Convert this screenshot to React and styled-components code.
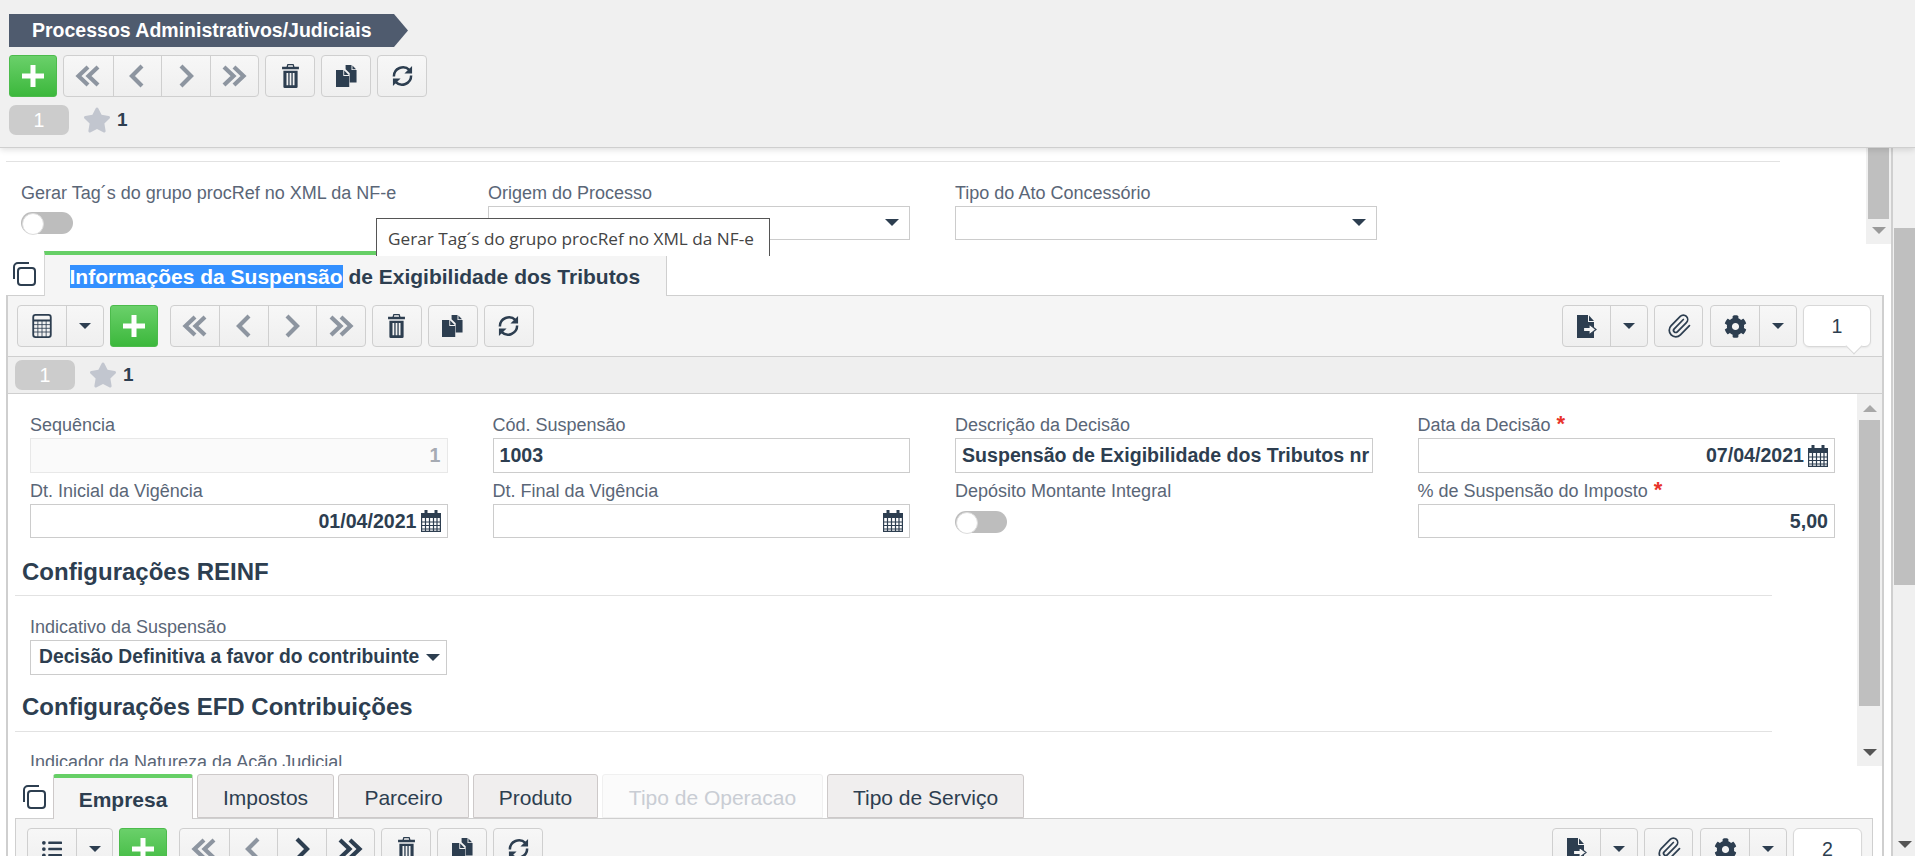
import React from 'react'
import styled, { createGlobalStyle } from 'styled-components'
import { FaCog, FaStar, FaListUl } from 'react-icons/fa'
import { Paperclip } from 'lucide-react'

const dark = '#2d3e50'
const FONT = '"Liberation Sans", Arial, sans-serif'

const GlobalStyle = createGlobalStyle`
  html, body {
    margin: 0;
    padding: 0;
    height: 100%;
    overflow: hidden;
    background: #fff;
  }
  * { box-sizing: border-box; }
`

const Page = styled.div`
  display: flex;
  flex-direction: column;
  height: 100vh;
  font-family: ${FONT};
  color: ${dark};
  overflow: hidden;
`

const Header = styled.header`
  position: relative;
  z-index: 3;
  flex: none;
  height: 148px;
  padding: 14px 0 0 9px;
  background: #f0f0f0;
  border-bottom: 1px solid #cfcfcf;
  box-shadow: 0 2px 6px rgba(0, 0, 0, 0.12);
`

const Title = styled.div`
  display: flex;
  align-items: center;
  width: 399px;
  height: 33px;
  padding-left: 23px;
  background: #4f5b6e;
  color: #fff;
  font-size: 19.5px;
  font-weight: 700;
  clip-path: polygon(0 0, 385px 0, 100% 50%, 385px 100%, 0 100%);
`

const Body = styled.div`
  display: flex;
  flex: 1;
  min-height: 0;
`

const Content = styled.div`
  display: flex;
  flex-direction: column;
  width: 1893px;
  flex: none;
  border-right: 2px solid #cfcfcf;
  overflow: hidden;
`

const Track = styled.div`
  display: flex;
  flex: none;
  flex-direction: column;
  align-items: center;
  width: ${(p) => p.$w}px;
  background: #f0f0f0;
`

const OuterTrack = styled(Track)`
  padding-left: 1px;
`

const Thumb = styled.div`
  flex: none;
  width: ${(p) => p.$w}px;
  height: ${(p) => p.$h}px;
  margin-top: ${(p) => p.$top || 0}px;
  background: #bfbfbf;
`

const Arrow = styled.div`
  flex: none;
  width: 0;
  height: 0;
  border-left: 7px solid transparent;
  border-right: 7px solid transparent;
  margin-top: ${(p) => (p.$auto ? 'auto' : p.$top ? `${p.$top}px` : '0')};
  margin-bottom: ${(p) => p.$bottom || 0}px;
  ${(p) =>
    p.$up
      ? `border-bottom: 7px solid ${p.$color};`
      : `border-top: 7px solid ${p.$color};`}
`

const Upper = styled.section`
  position: relative;
  flex: none;
  display: flex;
  height: 96px;
`

const UpperBody = styled.div`
  flex: 1;
  padding-left: 6px;
`

const UpperRule = styled.div`
  width: 1774px;
  height: 14px;
  border-bottom: 1px solid #e2e2e2;
`

const UpperGrid = styled.div`
  display: grid;
  grid-template-columns: repeat(3, 422px);
  column-gap: 45px;
  padding: 19.5px 0 0 15px;
`

const Field = styled.div`
  display: flex;
  flex-direction: column;
  min-width: 0;
`

const Label = styled.div`
  height: 24px;
  line-height: 22px;
  font-size: 18px;
  color: #5a6677;
  white-space: nowrap;
`

const Required = styled.span`
  margin-left: 6px;
  color: #e8332a;
  font-size: 22px;
  font-weight: 700;
  line-height: 18px;
`

const Box = styled.div`
  display: flex;
  align-items: center;
  justify-content: ${(p) => (p.$right ? 'flex-end' : 'flex-start')};
  gap: 4px;
  height: ${(p) => p.$h || 35}px;
  padding: 0 6px;
  background: ${(p) => (p.$disabled ? '#fafafa' : '#fff')};
  border: 1px solid ${(p) => (p.$disabled ? '#e8e8e8' : '#cccccc')};
  color: ${(p) => (p.$disabled ? '#a6abb3' : dark)};
  font-size: 19.6px;
  font-weight: 700;
  white-space: nowrap;
  overflow: hidden;
`

const SelectBox = styled(Box)`
  justify-content: ${(p) => (p.$tight ? 'space-between' : 'flex-end')};
  padding: ${(p) => (p.$tight ? '0 6px 0 8px' : '0 10px 0 6px')};
  font-size: 19.3px;
`

const Caret = styled.span`
  flex: none;
  display: inline-block;
  width: 0;
  height: 0;
  border-left: ${(p) => p.$s || 7}px solid transparent;
  border-right: ${(p) => p.$s || 7}px solid transparent;
  border-top: ${(p) => p.$s || 7}px solid ${dark};
`

const Toggle = styled.div`
  position: relative;
  width: 52px;
  height: 22px;
  margin-top: ${(p) => p.$top}px;
  background: #bdbdbd;
  border-radius: 11px;
  &::before {
    content: '';
    position: absolute;
    left: 1px;
    top: 1px;
    width: 20px;
    height: 20px;
    border-radius: 50%;
    background: #fff;
    border: 1px solid #ddd;
  }
`

const Tooltip = styled.div`
  position: absolute;
  z-index: 2;
  left: 376px;
  top: 70px;
  width: 394px;
  height: 38px;
  padding: 8px 0 0 11px;
  background: #fff;
  border: 1px solid #555;
  border-bottom: none;
  font-family: "Open Sans", sans-serif;
  font-size: 17.2px;
  line-height: 24px;
  color: #444;
  white-space: nowrap;
`

const MainTabRow = styled.div`
  flex: none;
  display: flex;
  align-items: flex-start;
  height: 45px;
  margin: 7px 7px 0 6px;
  padding-left: 6px;
  border-bottom: 1px solid #cfcfcf;
`

const CopyWrap = styled.div`
  flex: none;
  align-self: flex-start;
  width: ${(p) => p.$w}px;
  padding-top: ${(p) => p.$top}px;
  line-height: 0;
`

const MainTab = styled.div`
  position: relative;
  width: 623px;
  height: 45px;
  padding: 10px 0 0 25px;
  background: #f5f5f5;
  border-top: 4px solid #66cf66;
  border-left: 1px solid #d5d5d5;
  border-right: 1px solid #cfcfcf;
  font-size: 21px;
  font-weight: 700;
  line-height: 23px;
  white-space: nowrap;
`

const Selected = styled.span`
  background: #3390ff;
  color: #fff;
`

const Panel = styled.div`
  flex: 1;
  min-height: 0;
  margin: 0 7px 0 6px;
  border-left: 2px solid #cfcfcf;
  border-right: 2px solid #cfcfcf;
  overflow: hidden;
`

const Toolbar = styled.div`
  display: flex;
  align-items: flex-start;
  justify-content: space-between;
  height: ${(p) => p.$h}px;
  padding: ${(p) => p.$pad};
  background: #f5f5f5;
`

const HeaderTools = styled.div`
  display: flex;
  margin-top: 8px;
`

const ToolRow = styled.div`
  display: flex;
`

const Group = styled.div`
  flex: none;
  display: flex;
  height: 42px;
  margin-left: ${(p) => p.$ml ?? 6}px;
  background: linear-gradient(#f7f7f7, #efefef);
  border: 1px solid #cfcfcf;
  border-radius: 4px;
  overflow: hidden;
`

const Tool = styled.div`
  display: flex;
  align-items: center;
  justify-content: center;
  width: ${(p) => p.$w}px;
  height: 100%;
  & + & {
    border-left: 1px solid #cfcfcf;
  }
`

const AddButton = styled.div`
  flex: none;
  display: flex;
  align-items: center;
  justify-content: center;
  width: 48px;
  height: 42px;
  margin-left: ${(p) => p.$ml ?? 6}px;
  background: linear-gradient(#6ad06a, #3cb83c);
  border: 1px solid #4cbb4c;
  border-radius: 3px;
`

const PageBox = styled.div`
  position: relative;
  flex: none;
  display: flex;
  align-items: center;
  justify-content: center;
  width: ${(p) => p.$w}px;
  height: 42px;
  margin-left: 6px;
  background: #fff;
  border: 1px solid #d8d8d8;
  border-radius: 6px;
  font-size: 19.6px;
  color: ${dark};
  box-shadow: 0 1px 2px rgba(0, 0, 0, 0.06);
  &::after {
    content: '';
    position: absolute;
    right: 10px;
    bottom: -6px;
    width: 11px;
    height: 11px;
    background: #fff;
    border-right: 1px solid #d8d8d8;
    border-bottom: 1px solid #d8d8d8;
    transform: rotate(45deg);
  }
`

const RecordBar = styled.div`
  display: flex;
  align-items: center;
  height: ${(p) => p.$h}px;
  margin-top: ${(p) => p.$top || 0}px;
  padding-left: ${(p) => p.$pad}px;
  background: ${(p) => p.$bg || 'transparent'};
  border-top: ${(p) => (p.$bordered ? '1px solid #cfcfcf' : 'none')};
  border-bottom: ${(p) => (p.$bordered ? '1px solid #cfcfcf' : 'none')};
`

const Badge = styled.div`
  display: flex;
  align-items: center;
  justify-content: center;
  width: 60px;
  height: 30px;
  background: #cccccc;
  border-radius: 7px;
  color: #fff;
  font-size: 19.6px;
`

const StarCount = styled.div`
  display: flex;
  align-items: center;
  gap: 6px;
  margin-left: 14px;
  font-size: 19px;
  font-weight: 700;
`

const FormArea = styled.div`
  display: flex;
  height: 372px;
  background: #fff;
`

const FormScroll = styled.div`
  flex: 1;
  min-width: 0;
  overflow: hidden;
`

const FieldGrid = styled.div`
  display: grid;
  grid-template-columns: repeat(4, 417.5px);
  column-gap: 45px;
  row-gap: 7px;
  padding: 20px 0 0 22px;
`

const SectionHead = styled.h3`
  width: 1757px;
  height: ${(p) => p.$h}px;
  margin: ${(p) => p.$top}px 0 0 7px;
  padding-left: 7px;
  border-bottom: 1px solid #e2e2e2;
  font-size: 24px;
  font-weight: 700;
  line-height: 33px;
  color: ${dark};
`

const SectionField = styled(Field)`
  width: 417px;
  margin: 19.5px 0 0 22px;
`

const SubTabRow = styled.div`
  display: flex;
  align-items: flex-end;
  height: 52px;
  padding-left: 14px;
`

const SubTab = styled.div`
  flex: none;
  display: flex;
  align-items: center;
  justify-content: center;
  width: ${(p) => p.$w}px;
  height: ${(p) => (p.$active ? 45 : 44)}px;
  margin: 0 4px ${(p) => (p.$active ? -1 : 0)}px 0;
  padding-top: ${(p) => (p.$active ? 2 : 4)}px;
  position: relative;
  z-index: 1;
  background: ${(p) => (p.$active ? '#f5f5f5' : p.$disabled ? '#fbfbfb' : '#f0eeee')};
  border: 1px solid ${(p) => (p.$disabled ? '#f0f0f0' : '#cdc9c9')};
  border-top: ${(p) => (p.$active ? '4px solid #66cf66' : undefined)};
  border-bottom: ${(p) => (p.$active ? 'none' : undefined)};
  border-radius: 3px 3px 0 0;
  color: ${(p) => (p.$disabled ? '#c9cdd4' : dark)};
  font-size: 21px;
  font-weight: ${(p) => (p.$active ? 700 : 400)};
`

const SubPanel = styled.div`
  width: 1858px;
  margin-left: 7px;
  border-left: 1px solid #cfcfcf;
  border-right: 1px solid #cfcfcf;
  border-top: 1px solid #cfcfcf;
`

const Svg = ({ w, h, vb, children, color = dark }) => (
  <svg width={w} height={h} viewBox={vb} fill={color} aria-hidden="true">
    {children}
  </svg>
)

const Plus = () => (
  <Svg w={24} h={24} vb="0 0 24 24" color="#fff">
    <path d="M9.5 1h5v8.5H23v5h-8.5V23h-5v-8.5H1v-5h8.5z" />
  </Svg>
)

const DoubleAngle = ({ dir, color }) => (
  <Svg w={26} h={24} vb="0 0 26 24" color="none">
    <g
      stroke={color}
      strokeWidth="4.2"
      fill="none"
      transform={dir === 'right' ? 'matrix(-1 0 0 1 26 0)' : undefined}
    >
      <path d="M13 3 3.5 12 13 21" />
      <path d="M23 3 13.5 12 23 21" />
    </g>
  </Svg>
)

const Angle = ({ dir, color }) => (
  <Svg w={16} h={26} vb="0 0 16 26" color="none">
    <path
      d={dir === 'right' ? 'M3 3 13 13 3 23' : 'M13 3 3 13 13 23'}
      stroke={color}
      strokeWidth="4.2"
      fill="none"
    />
  </Svg>
)

const Trash = () => (
  <Svg w={17} h={24} vb="0 0 19 27">
    <path
      fillRule="evenodd"
      d="M6 0h7l1 3h5v3H0V3h5zM7 1.500 6.600 3h5.800L12 1.500zM1.500 7.500h16V25.500a1.500 1.500 0 0 1-1.500 1.500H3a1.500 1.500 0 0 1-1.500-1.500zM5 10v14h2V10zM8.500 10v14h2V10zM12 10v14h2V10z"
    />
  </Svg>
)

const Files = () => (
  <Svg w={21} h={22} vb="0 0 23 24">
    <path d="M10.500 0H17v5.500h5.500V19H15V9L10.500 4.500z" />
    <path d="M18 .5 22 4.500h-4z" />
    <path d="M0 5.500h8V12h6.500v12H0z" />
    <path d="M9 6 14 11H9z" />
  </Svg>
)

const Refresh = () => (
  <Svg w={23} h={24} vb="0 0 24 25" color="none">
    <path d="M3 13A9.500 9.500 0 0 1 19.300 6.300" stroke={dark} strokeWidth="2.600" fill="none" />
    <path d="M21 12A9.500 9.500 0 0 1 4.700 18.700" stroke={dark} strokeWidth="2.600" fill="none" />
    <path d="M22 2v8h-8z" fill={dark} />
    <path d="M2 23v-8h8z" fill={dark} />
  </Svg>
)

const Calendar = () => (
  <Svg w={20} h={22} vb="0 0 20 22">
    <path d="M3.500 0h3v3h7V0h3v3H20v5H0V3h3.500z" />
    <g stroke={dark} strokeWidth="1.200" fill="none">
      <path d="M.6 8v13.400h18.800V8" />
      <path d="M0 12h20M0 15.500h20M0 19h20M4.500 8v13M8.500 8v13M12.500 8v13M16 8v13" />
    </g>
  </Svg>
)

const TableIcon = () => (
  <Svg w={20} h={24} vb="0 0 21 26" color="none">
    <rect x="1" y="1" width="19" height="24" rx="2.500" stroke={dark} strokeWidth="2" />
    <path d="M1 7h19" stroke={dark} strokeWidth="2" />
    <path d="M1 11.500h19M1 15.500h19M1 19.500h19M6 7v18M10.500 7v18M15 7v18" stroke={dark} strokeWidth=".9" />
  </Svg>
)

const ExportFile = () => (
  <Svg w={20} h={23} vb="0 0 20 23">
    <path d="M0 0h11v7h6v16H0z" />
    <path d="M12 .5 17 6h-5z" />
    <path d="M6.500 12.500H12V9l7 5.500L12 20v-3.500H6.500z" fill="#f5f5f5" stroke={dark} strokeWidth="1.200" />
  </Svg>
)

const CopyTabs = () => (
  <Svg w={24} h={24} vb="0 0 24 24" color="none">
    <rect x="6" y="6" width="17" height="17" rx="3" stroke={dark} strokeWidth="2" />
    <path d="M2 17V5a4 4 0 0 1 4-4h11" stroke={dark} strokeWidth="2" fill="none" />
  </Svg>
)

const EditTools = () => (
  <>
    <Group>
      <Tool $w={48}><Trash /></Tool>
    </Group>
    <Group>
      <Tool $w={48}><Files /></Tool>
    </Group>
    <Group>
      <Tool $w={48}><Refresh /></Tool>
    </Group>
  </>
)

const NavTools = ({ ml, active }) => {
  const prev = '#8d95a0'
  const next = active ? dark : prev
  return (
    <Group $ml={ml}>
      <Tool $w={48.5}><DoubleAngle color={prev} /></Tool>
      <Tool $w={48.5}><Angle color={prev} /></Tool>
      <Tool $w={48.5}><Angle dir="right" color={next} /></Tool>
      <Tool $w={48.5}><DoubleAngle dir="right" color={next} /></Tool>
    </Group>
  )
}

const RightTools = ({ count, pageWidth }) => (
  <ToolRow>
    <Group $ml={0}>
      <Tool $w={47}><ExportFile /></Tool>
      <Tool $w={37}><Caret $s={6} /></Tool>
    </Group>
    <Group>
      <Tool $w={47}><Paperclip size={26} color={dark} strokeWidth={1.6} /></Tool>
    </Group>
    <Group $ml={7}>
      <Tool $w={48}><FaCog size={23} color={dark} /></Tool>
      <Tool $w={37}><Caret $s={6} /></Tool>
    </Group>
    <PageBox $w={pageWidth}>{count}</PageBox>
  </ToolRow>
)

const Records = () => (
  <>
    <Badge>1</Badge>
    <StarCount>
      <FaStar size={28} color="#c2c6cf" />
      1
    </StarCount>
  </>
)

export default function App() {
  return (
    <Page>
      <GlobalStyle />
      <Header>
        <Title>Processos Administrativos/Judiciais</Title>
        <HeaderTools>
          <AddButton $ml={0}><Plus /></AddButton>
          <NavTools />
          <EditTools />
        </HeaderTools>
        <RecordBar $h={30} $pad={0} $top={8}>
          <Records />
        </RecordBar>
      </Header>
      <Body>
        <Content>
          <Upper>
            <UpperBody>
              <UpperRule />
              <UpperGrid>
                <Field>
                  <Label>Gerar Tag´s do grupo procRef no XML da NF-e</Label>
                  <Toggle $top={6} />
                </Field>
                <Field>
                  <Label>Origem do Processo</Label>
                  <SelectBox $h={34}><Caret /></SelectBox>
                </Field>
                <Field>
                  <Label>Tipo do Ato Concessório</Label>
                  <SelectBox $h={34}><Caret /></SelectBox>
                </Field>
              </UpperGrid>
            </UpperBody>
            <Track $w={25}>
              <Thumb $w={21} $h={71} />
              <Arrow $color="#9a9a9a" $top={8} />
            </Track>
            <Tooltip>Gerar Tag´s do grupo procRef no XML da NF-e</Tooltip>
          </Upper>

          <MainTabRow>
            <CopyWrap $w={31.5} $top={11}><CopyTabs /></CopyWrap>
            <MainTab>
              <Selected>Informações da Suspensão</Selected> de Exigibilidade dos Tributos
            </MainTab>
          </MainTabRow>

          <Panel>
            <Toolbar $h={60} $pad="9px 11px 0 9px">
              <ToolRow>
                <Group $ml={0}>
                  <Tool $w={47.5}><TableIcon /></Tool>
                  <Tool $w={37}><Caret $s={6} /></Tool>
                </Group>
                <AddButton><Plus /></AddButton>
                <NavTools ml={12} />
                <EditTools />
              </ToolRow>
              <RightTools count="1" pageWidth={68} />
            </Toolbar>
            <RecordBar $h={38} $pad={7} $bg="#efefef" $bordered>
              <Records />
            </RecordBar>

            <FormArea>
              <FormScroll>
                <FieldGrid>
                  <Field>
                    <Label>Sequência</Label>
                    <Box $right $disabled>1</Box>
                  </Field>
                  <Field>
                    <Label>Cód. Suspensão</Label>
                    <Box>1003</Box>
                  </Field>
                  <Field>
                    <Label>Descrição da Decisão</Label>
                    <Box>Suspensão de Exigibilidade dos Tributos nr</Box>
                  </Field>
                  <Field>
                    <Label>Data da Decisão<Required>*</Required></Label>
                    <Box $right>07/04/2021 <Calendar /></Box>
                  </Field>
                  <Field>
                    <Label>Dt. Inicial da Vigência</Label>
                    <Box $right $h={34}>01/04/2021 <Calendar /></Box>
                  </Field>
                  <Field>
                    <Label>Dt. Final da Vigência</Label>
                    <Box $right $h={34}><Calendar /></Box>
                  </Field>
                  <Field>
                    <Label>Depósito Montante Integral</Label>
                    <Toggle $top={7} />
                  </Field>
                  <Field>
                    <Label>% de Suspensão do Imposto<Required>*</Required></Label>
                    <Box $right $h={34}>5,00</Box>
                  </Field>
                </FieldGrid>

                <SectionHead $top={17} $h={41}>Configurações REINF</SectionHead>
                <SectionField>
                  <Label>Indicativo da Suspensão</Label>
                  <SelectBox $h={35} $tight>
                    Decisão Definitiva a favor do contribuinte
                    <Caret />
                  </SelectBox>
                </SectionField>
                <SectionHead $top={15} $h={42}>Configurações EFD Contribuições</SectionHead>
                <SectionField>
                  <Label>Indicador da Natureza da Ação Judicial</Label>
                </SectionField>
              </FormScroll>
              <Track $w={25}>
                <Arrow $up $color="#a8a8a8" $top={11} />
                <Thumb $w={21} $h={286} $top={8} />
                <Arrow $color="#555" $top={43} />
              </Track>
            </FormArea>

            <SubTabRow>
              <CopyWrap $w={31} $top={19}><CopyTabs /></CopyWrap>
              <SubTab $active $w={140}>Empresa</SubTab>
              <SubTab $w={137}>Impostos</SubTab>
              <SubTab $w={131}>Parceiro</SubTab>
              <SubTab $w={125}>Produto</SubTab>
              <SubTab $disabled $w={221}>Tipo de Operacao</SubTab>
              <SubTab $w={197}>Tipo de Serviço</SubTab>
            </SubTabRow>
            <SubPanel>
              <Toolbar $h={60} $pad="9px 10px 0 11px">
                <ToolRow>
                  <Group $ml={0}>
                    <Tool $w={48}><FaListUl size={20} color={dark} /></Tool>
                    <Tool $w={36}><Caret $s={6} /></Tool>
                  </Group>
                  <AddButton><Plus /></AddButton>
                  <NavTools ml={12} active />
                  <EditTools />
                </ToolRow>
                <RightTools count="2" pageWidth={69} />
              </Toolbar>
            </SubPanel>
          </Panel>
        </Content>
        <OuterTrack $w={22}>
          <Thumb $w={21} $h={357} $top={80} />
          <Arrow $color="#555" $auto $bottom={8} />
        </OuterTrack>
      </Body>
    </Page>
  )
}
